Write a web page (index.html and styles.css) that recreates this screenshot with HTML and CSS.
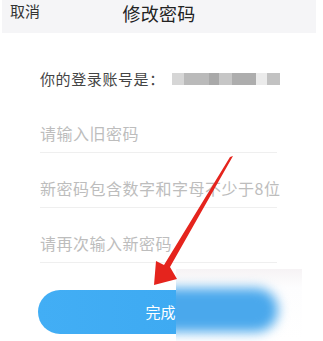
FILE: index.html
```html
<!DOCTYPE html>
<html lang="zh">
<head>
<meta charset="utf-8">
<link rel="stylesheet" href="styles.css">
</head>
<body>
<div class="page">
  <header class="topbar">
    <span class="cancel">取消</span>
    <span class="title">修改密码</span>
    <span></span>
  </header>
  <main class="form">
    <div class="account">
      <span class="label">你的登录账号是：</span>
      <span class="mask">
        <i class="m1"></i><i class="m2"></i><i class="m3"></i><i class="m4"></i><i class="m5"></i><i class="m6"></i><i class="m7"></i>
      </span>
    </div>
    <div class="field">请输入旧密码</div>
    <div class="field">新密码包含数字和字母不少于8位</div>
    <div class="field">请再次输入新密码</div>
  </main>
  <div class="btnwrap"><div class="btn">完成</div></div>
  <div class="blurbox"><div class="blurpill"></div></div>
  <svg class="arrow" width="323" height="341" viewBox="0 0 323 341">
    <polygon points="233,156 170,267 177,279 154,285 156,261 164,265 230,157" fill="#e5241d"/>
  </svg>
</div>
</body>
</html>
```
FILE: styles.css
```css
* { box-sizing: border-box; }
html, body { margin: 0; padding: 0; background: #fff; }
.page {
  position: relative;
  width: 323px;
  height: 341px;
  overflow: hidden;
  font-family: "Noto Sans CJK SC", "Noto Sans", sans-serif;
}
.topbar {
  height: 33px;
  margin: 0 7px 0 2px;
  background: #f5f5f7;
  display: grid;
  grid-template-columns: 1fr auto 1fr;
  align-items: start;
  line-height: 22px;
  white-space: nowrap;
}
.cancel { font-size: 15px; color: #333; padding-left: 8px; }
.title { font-size: 18px; line-height: 26px; color: #222; letter-spacing: 0.3px; }
.form { margin: 35px 46px 0 40px; white-space: nowrap; }
.account {
  display: flex;
  align-items: center;
  line-height: 22px;
  height: 22px;
  margin-bottom: 8px;
}
.label { flex-shrink: 0; font-size: 15px; color: #444; letter-spacing: 0.6px; }
.mask { display: flex; flex-shrink: 0; height: 12px; margin-left: 7px; filter: blur(0.4px); }
.mask i { display: block; height: 12px; }
.m1 { width: 12px; background: #d6d6d6; }
.m2 { width: 25px; background: #bababa; }
.m3 { width: 10px; background: #a9a9a9; }
.m4 { width: 13px; background: #c6c6c6; }
.m5 { width: 24px; background: #adadad; }
.m6 { width: 11px; background: #ebebeb; }
.m7 { width: 13px; background: #c2c2c2; }
.field {
  height: 55px;
  padding-top: 24px;
  line-height: 22px;
  font-size: 16px;
  letter-spacing: 0.5px;
  color: #bdbdbd;
  border-bottom: 1px solid #efefef;
}
.btnwrap { margin: 27px 0 0 38px; }
.btn {
  width: 245px;
  height: 44px;
  border-radius: 22px;
  background: linear-gradient(90deg, #42aef5, #3ba7f0);
  color: #fff;
  font-size: 15px;
  text-align: center;
  line-height: 44px;
}
.blurbox {
  position: absolute;
  left: 176px;
  top: 269px;
  width: 126px;
  height: 72px;
  background: linear-gradient(180deg, #f6f3f5 0%, #fdfdfe 25%, #fff 100%);
  overflow: hidden;
}
.blurpill {
  position: absolute;
  left: -40px;
  top: 19px;
  width: 142px;
  height: 44px;
  border-radius: 22px;
  background: #4aa8ec;
  filter: blur(6px);
}
.arrow { position: absolute; left: 0; top: 0; }
```
